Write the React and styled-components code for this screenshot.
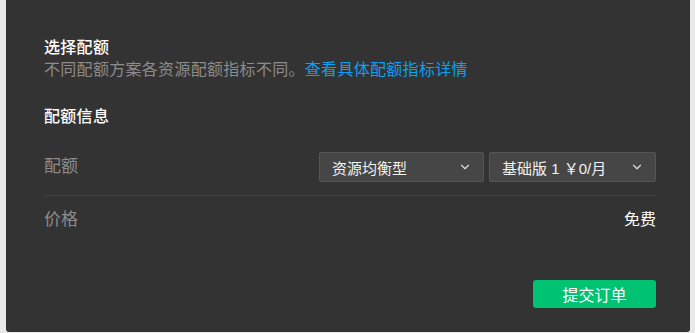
import styled, {createGlobalStyle} from 'styled-components';
import {ChevronDown} from 'lucide-react';

const Global=createGlobalStyle`
	html,body{
		margin:0;
		padding:0;
		background:#e9e9e9;
	}
	body{
		font-family:"Liberation Sans","Noto Sans CJK SC",sans-serif;
	}
`
const Page=styled.div`
	height:333px;
	padding:0 5px 1px 6px;
	box-sizing:border-box;
`
const Panel=styled.div`
	height:100%;
	background:#333333;
	border-radius:0 0 3px 3px;
	padding:37px 34px 0 38px;
	box-sizing:border-box;
	display:flex;
	flex-direction:column;
`
const Title=styled.div`
	font-size:16px;
	line-height:22px;
	color:#ffffff;
	font-weight:500;
	letter-spacing:0.3px;
`
const Desc=styled.div`
	font-size:16px;
	line-height:22px;
	color:#8c8c8c;
	letter-spacing:0.3px;
`
const Link=styled.a`
	color:#0aa0f5;
	text-decoration:none;
	cursor:pointer;
`
const Section=styled.div`
	margin-top:25px;
	font-size:16px;
	line-height:22px;
	color:#ffffff;
	font-weight:500;
	letter-spacing:0.3px;
`
const Row=styled.div`
	display:flex;
	align-items:center;
	justify-content:space-between;
	padding:${p=>p.first ? '24px 0 13px' : '13px 0 0'};
	border-bottom:${p=>p.first ? '1px solid #3e3e3e' : 'none'};
`
const Label=styled.span`
	font-size:17px;
	line-height:22px;
	color:#8c8c8c;
`
const Value=styled.span`
	font-size:16px;
	line-height:22px;
	color:#ffffff;
`
const Selects=styled.div`
	display:flex;
	gap:5px;
`
const Select=styled.div`
	width:${p=>p.w}px;
	height:30px;
	box-sizing:border-box;
	background:#464646;
	border:1px solid #565656;
	border-radius:2px;
	display:flex;
	align-items:center;
	justify-content:space-between;
	padding:0 11px 0 12px;
	font-size:15px;
	color:#f2f2f2;
	svg{
		color:#dddddd;
	}
`
const Footer=styled.div`
	margin-top:49px;
	display:flex;
	justify-content:flex-end;
`
const Button=styled.button`
	width:123px;
	height:28px;
	border:none;
	border-radius:3px;
	background:#00c273;
	color:#ffffff;
	font-family:inherit;
	font-size:16px;
	cursor:pointer;
`

const App = () => {
	return (
		<Page>
			<Global />
			<Panel>
				<Title>选择配额</Title>
				<Desc>不同配额方案各资源配额指标不同。<Link>查看具体配额指标详情</Link></Desc>
				<Section>配额信息</Section>
				<Row first>
					<Label>配额</Label>
					<Selects>
						<Select w={165}>
							<span>资源均衡型</span>
							<ChevronDown size={14} strokeWidth={2}/>
						</Select>
						<Select w={167}>
							<span>基础版 1 ￥0/月</span>
							<ChevronDown size={14} strokeWidth={2}/>
						</Select>
					</Selects>
				</Row>
				<Row>
					<Label>价格</Label>
					<Value>免费</Value>
				</Row>
				<Footer>
					<Button>提交订单</Button>
				</Footer>
			</Panel>
		</Page>
	)
}

export default App
